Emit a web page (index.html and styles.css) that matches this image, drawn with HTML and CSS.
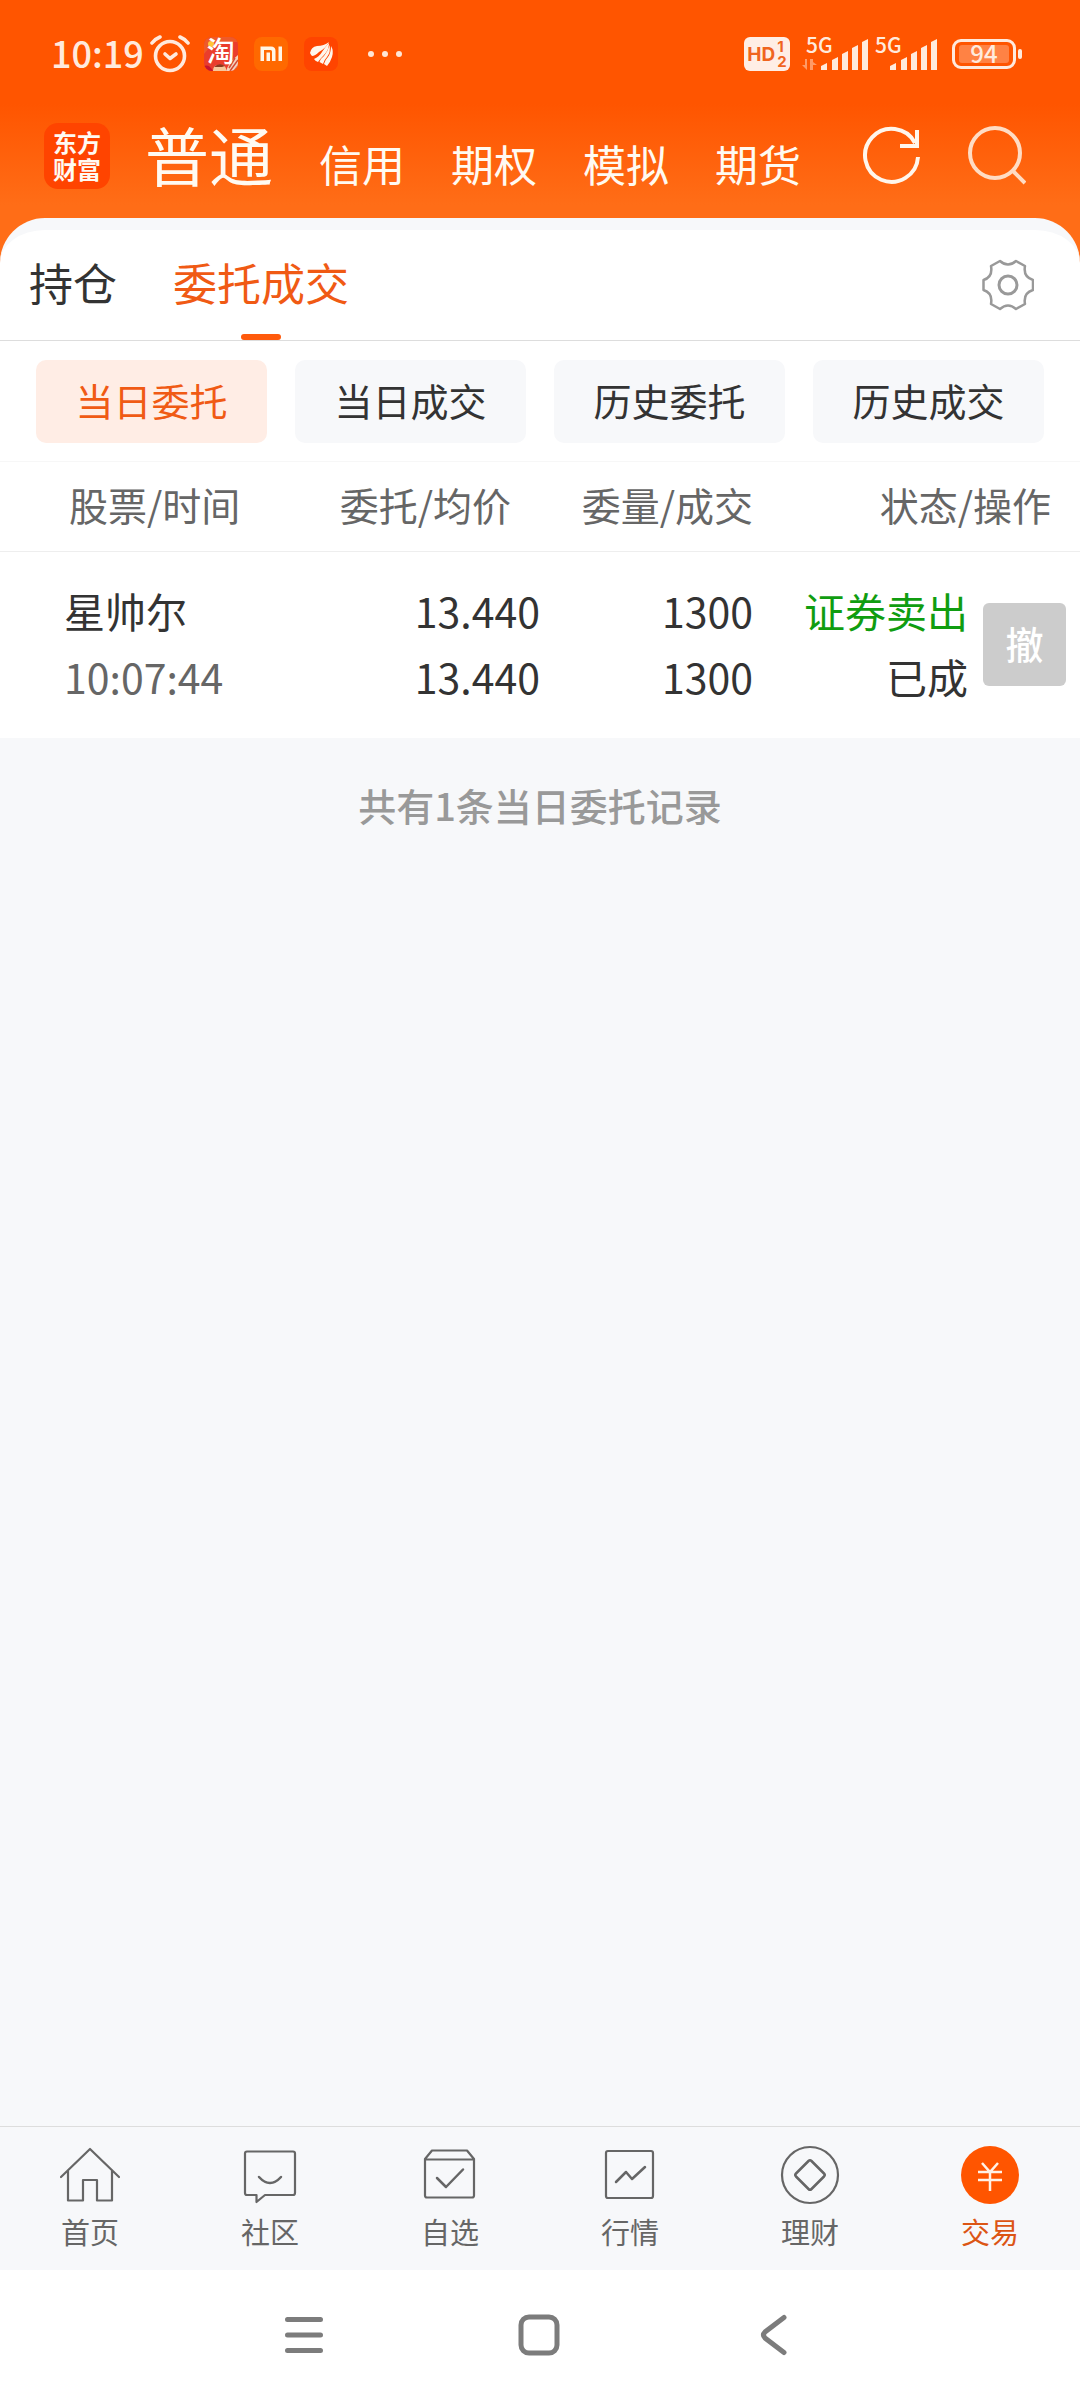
FILE: index.html
```html
<!DOCTYPE html>
<html lang="zh-CN">
<head>
<meta charset="utf-8">
<meta name="viewport" content="width=device-width, initial-scale=1">
<title>委托成交</title>
<link rel="stylesheet" href="styles.css">
</head>
<body>
<div class="app">
  <header class="top">
    <div class="status">
      <div class="status-left">
        <span class="clock">10:19</span>
        <svg class="alarm" width="40" height="38" viewBox="0 0 40 38" fill="none" stroke="#ffeadd" stroke-linecap="round">
          <circle cx="20" cy="21" r="14.5" stroke-width="3.6"/>
          <path d="M2 8Q5 4 10 2M38 8Q35 4 30 2" stroke-width="3.6"/>
          <path d="M15 19l5 4.500 6-4.500" stroke-width="3.600" stroke-linejoin="round"/>
        </svg>
        <span class="badge">
          <svg class="badge-art" width="34" height="34" viewBox="0 0 34 34">
            <rect width="34" height="34" fill="#ea3d2c"/>
            <path d="M0 0h34v5H20l-6 2-9 4-5 6z" fill="#ee5a2a"/>
            <circle cx="7" cy="7" r="3" fill="#ffc63a"/>
            <path d="M34 18v16H22q3-9 12-16z" fill="#f4d2bc"/>
            <path d="M34 23l-8 11M34 29l-4 5M31 21l-6 10" stroke="#d64a35" stroke-width="1.500"/>
            <path d="M0 29q5-2 9 5H0z" fill="#c9142f"/>
            <path d="M9 34q0-7 7-6 7 0 6 6z" fill="#f7c79a"/>
            <path d="M10 30q5-5 11-1l-3 1z" fill="#8a3a22"/>
          </svg>
          <span class="badge-text">淘</span>
        </span>
        <span class="badge">
          <svg class="badge-art" width="34" height="34" viewBox="0 0 34 34">
            <rect width="34" height="34" fill="#ff6900"/>
            <path d="M6.500 24V9.500H17Q21.500 9.500 21.500 14V24H18V14.500Q18 13 16.500 13H10V24zM12.500 15.500h3.500V24h-3.500zM24.500 9.500H28V24h-3.500z" fill="#fff6e6"/>
          </svg>
        </span>
        <span class="badge">
          <svg class="badge-art" width="34" height="34" viewBox="0 0 34 34">
            <rect width="34" height="34" fill="#ff4400"/>
            <g fill="#fff6ec">
              <path d="M6 16Q7 10 13 9Q20 9 25 5Q22 11 15 15Q11 19 8 19Q7 18 6 16z"/>
              <path d="M25 6Q25 13 20 18Q16 22 14 25Q11 24 10 22Q15 20 18 15Q21 10 25 6z"/>
              <path d="M25.500 8Q27 15 23 20Q20 23 19 27L15.500 25Q17 21 20 19Q24 14 25.500 8z"/>
              <path d="M27 9Q30 14 28 20Q26 26 23 29L20 27Q21 23 24 20Q27 16 27 9z"/>
            </g>
          </svg>
        </span>
        <svg class="more" width="34" height="8" viewBox="0 0 34 8" fill="#ffe6d6">
          <circle cx="3" cy="4" r="3"/><circle cx="17" cy="4" r="3"/><circle cx="31" cy="4" r="3"/>
        </svg>
      </div>
      <div class="status-right">
        <span class="hd"><span class="hd-main">HD</span><span class="hd-sims"><span>1</span><span>2</span></span></span>
        <span class="signal">
          <span class="signal-type">5G</span>
          <svg width="67" height="34" viewBox="0 0 67 34">
            <path d="M5 22v11l-5-5h3v-6zM8 33V22h3v3l4 3h-4v5z" fill="#ff9a66"/>
            <g fill="#ffeadd"><path d="M19 33v-4l6-3v7zM30 33V23l6-3v13zM40 33V17l6-3v19zM50 33V11l6-3v25zM60 33V5l6-3v31z"/></g>
          </svg>
        </span>
        <span class="signal second">
          <span class="signal-type">5G</span>
          <svg width="67" height="34" viewBox="0 0 67 34">
            <g fill="#ffeadd"><path d="M19 33v-4l6-3v7zM30 33V23l6-3v13zM40 33V17l6-3v19zM50 33V11l6-3v25zM60 33V5l6-3v31z"/></g>
          </svg>
        </span>
        <span class="battery"><span class="battery-level">94</span></span>
      </div>
    </div>
    <div class="bar">
      <a class="logo" href="#home"><span>东方</span><span>财富</span></a>
      <nav class="modes">
        <a class="mode current" href="#normal">普通</a>
        <a class="mode" href="#credit">信用</a>
        <a class="mode" href="#options">期权</a>
        <a class="mode" href="#demo">模拟</a>
        <a class="mode" href="#futures">期货</a>
      </nav>
      <div class="tools">
        <button class="icon-button" type="button" aria-label="刷新">
          <svg width="60" height="60" viewBox="0 0 60 60" fill="none" stroke="#fff6ec" stroke-width="4">
            <path d="M56 31A26.500 26.500 0 1 1 53 17"/>
            <path d="M55 4v16H38"/>
          </svg>
        </button>
        <button class="icon-button" type="button" aria-label="搜索">
          <svg width="60" height="60" viewBox="0 0 60 60" fill="none" stroke="#ffdcc4" stroke-width="4">
            <circle cx="29" cy="27" r="25"/>
            <path d="M46 44l13 13"/>
          </svg>
        </button>
      </div>
    </div>
  </header>

  <main class="sheet">
    <div class="tabs">
      <a class="tab" href="#positions">持仓</a>
      <a class="tab active" href="#orders">委托成交</a>
      <button class="icon-button settings" type="button" aria-label="设置">
        <svg width="52" height="52" viewBox="0 0 52 52" fill="none" stroke="#999" stroke-width="2.500" stroke-linejoin="round">
          <path d="M18 2Q26 9 34 2L43 7Q41 18 51 21V31Q41 34 43 45L34 50Q26 43 18 50L9 45Q11 34 1.500 31V21Q11 18 9 7Z"/>
          <circle cx="26" cy="26" r="9" stroke-width="3"/>
        </svg>
      </button>
    </div>

    <div class="filters">
      <button class="chip selected" type="button">当日委托</button>
      <button class="chip" type="button">当日成交</button>
      <button class="chip" type="button">历史委托</button>
      <button class="chip" type="button">历史成交</button>
    </div>

    <table class="orders">
      <thead>
        <tr>
          <th class="name" scope="col">股票/时间</th>
          <th class="price" scope="col">委托/均价</th>
          <th class="amount" scope="col">委量/成交</th>
          <th class="state" scope="col">状态/操作</th>
        </tr>
      </thead>
      <tbody>
        <tr>
          <td class="name"><div>星帅尔</div><div class="time">10:07:44</div></td>
          <td class="price"><div>13.440</div><div>13.440</div></td>
          <td class="amount"><div>1300</div><div>1300</div></td>
          <td class="state">
            <div class="state-row">
              <div class="state-text"><div class="sell">证券卖出</div><div>已成</div></div>
              <button class="cancel" type="button" disabled>撤</button>
            </div>
          </td>
        </tr>
      </tbody>
    </table>
  </main>

  <p class="summary">共有1条当日委托记录</p>

  <nav class="dock">
    <a class="dock-item" href="#index">
      <svg width="60" height="60" viewBox="0 0 60 60" fill="none" stroke="#666" stroke-width="2.2" stroke-linejoin="round" stroke-linecap="round">
        <path d="M1 32L30 4l29 28M8 26v29.500h15V35h14v20.500h15V26"/>
      </svg>
      <span>首页</span>
    </a>
    <a class="dock-item" href="#community">
      <svg width="60" height="60" viewBox="0 0 60 60" fill="none" stroke="#666" stroke-width="2.2" stroke-linejoin="round" stroke-linecap="round">
        <path d="M7 6.500h46q2 0 2 2V48q0 2-2 2H25l-8.500 7V50H7q-2 0-2-2V8.500q0-2 2-2z"/>
        <path d="M19 32q11 12 22 0" stroke-width="2.500"/>
      </svg>
      <span>社区</span>
    </a>
    <a class="dock-item" href="#watchlist">
      <svg width="60" height="60" viewBox="0 0 60 60" fill="none" stroke="#666" stroke-width="2.2" stroke-linejoin="round" stroke-linecap="round">
        <path d="M5 14l7-8.500h35l7 8.500v36.500q0 2-2 2H7q-2 0-2-2zM5 14.500h49"/>
        <path d="M17 33l9 9 17-17.500" stroke-width="2.500"/>
      </svg>
      <span>自选</span>
    </a>
    <a class="dock-item" href="#quotes">
      <svg width="60" height="60" viewBox="0 0 60 60" fill="none" stroke="#666" stroke-width="2.2" stroke-linejoin="round" stroke-linecap="round">
        <rect x="6" y="6" width="47" height="47" rx="2"/>
        <path d="M16 37l10-10 6 7 13-12" stroke-width="2.500"/>
      </svg>
      <span>行情</span>
    </a>
    <a class="dock-item" href="#wealth">
      <svg width="60" height="60" viewBox="0 0 60 60" fill="none" stroke="#666" stroke-width="2.200" stroke-linejoin="round">
        <circle cx="30" cy="30" r="28"/>
        <path d="M28.500 16q1.500-1.500 3 0L44 28.500q1.500 1.500 0 3L31.500 44q-1.500 1.500-3 0L16 31.500q-1.500-1.500 0-3z" stroke-width="2.500"/>
      </svg>
      <span>理财</span>
    </a>
    <a class="dock-item active" href="#trade">
      <svg width="60" height="60" viewBox="0 0 60 60" fill="none" stroke="#fff1e6" stroke-width="2.500">
        <circle cx="30" cy="30" r="29" fill="#ff5500" stroke="none"/>
        <path d="M22 18l8 9 8-9M18 27h24M18 35h24M30 27v19"/>
      </svg>
      <span>交易</span>
    </a>
  </nav>

  <div class="system">
    <button class="icon-button" type="button" aria-label="最近任务">
      <svg width="42" height="42" viewBox="0 0 42 42" fill="none" stroke="#7c7c7c" stroke-width="5" stroke-linecap="round">
        <path d="M4.500 5.500h33M4.500 21h33M4.500 36.500h33"/>
      </svg>
    </button>
    <button class="icon-button" type="button" aria-label="主屏幕">
      <svg width="42" height="42" viewBox="0 0 42 42" fill="none" stroke="#7c7c7c" stroke-width="5">
        <rect x="3" y="3" width="36" height="36" rx="8"/>
      </svg>
    </button>
    <button class="icon-button" type="button" aria-label="返回">
      <svg width="42" height="42" viewBox="0 0 42 42" fill="none" stroke="#7c7c7c" stroke-width="5" stroke-linecap="round">
        <path d="M31 3.500L12 18q-3 3 0 6l19 14.500"/>
      </svg>
    </button>
  </div>
</div>
</body>
</html>
```
FILE: styles.css
```css
* {
  box-sizing: border-box;
}

body {
  margin: 0;
  background: #fff;
  color: #333;
  font-family: "Noto Sans CJK SC", "Noto Sans", sans-serif;
  font-size: 41px;
}

a {
  color: inherit;
  text-decoration: none;
}

button {
  margin: 0;
  padding: 0;
  border: 0;
  background: none;
  color: inherit;
  font: inherit;
}

svg {
  display: block;
  flex: none;
}

.app {
  display: flex;
  flex-direction: column;
  min-height: 100vh;
  background: #f7f8fa;
}

/* Orange header */

.top {
  padding-bottom: 71px;
  background: linear-gradient(#ff5500 0, #ff5500 104px, #ff6d17 205px, #ff6d17 100%);
  color: #fffaf2;
}

.status {
  display: flex;
  justify-content: space-between;
  align-items: center;
  height: 108px;
  padding: 0 64px 0 51px;
  color: #ffeadd;
}

.status-left,
.status-right {
  display: flex;
  align-items: center;
}

.clock {
  margin-right: 6px;
  padding-bottom: 4px;
  font-size: 36px;
  font-weight: 500;
  line-height: 40px;
}

.alarm {
  margin-right: 14px;
}

.badge {
  position: relative;
  width: 34px;
  height: 34px;
  margin-right: 16px;
}

.badge-art {
  border-radius: 8px;
}

.badge-text {
  position: absolute;
  top: 0;
  left: 3px;
  color: #fff;
  font-size: 28px;
  font-weight: 500;
  line-height: 26px;
}

.more {
  margin-left: 14px;
}

.hd {
  display: flex;
  align-items: center;
  justify-content: center;
  gap: 2px;
  width: 46px;
  height: 34px;
  margin-right: 12px;
  border-radius: 6px;
  background: #ffeee5;
  color: #f0641e;
  font-family: Inter, sans-serif;
  font-weight: 700;
}

.hd-main {
  font-size: 19px;
}

.hd-sims {
  display: flex;
  flex-direction: column;
  font-size: 15px;
  line-height: 15px;
}

.signal {
  position: relative;
  margin-right: 2px;
}

.signal-type {
  position: absolute;
  top: 0;
  left: 4px;
  font-size: 21px;
  font-weight: 500;
  line-height: 14px;
}

.signal.second {
  margin-right: 14px;
}

.battery {
  position: relative;
  width: 64px;
  height: 30px;
  padding: 3px 4px;
  border: 3px solid #ffeadd;
  border-radius: 9px;
}

.battery::after {
  content: "";
  position: absolute;
  top: 7px;
  right: -9px;
  width: 4px;
  height: 10px;
  border-radius: 2px;
  background: #ffeadd;
}

.battery-level {
  display: block;
  height: 18px;
  border-radius: 3px;
  background: #ff8244;
  font-size: 24px;
  font-weight: 500;
  line-height: 16px;
  text-align: center;
}

.bar {
  display: flex;
  align-items: center;
  height: 96px;
  padding: 0 54px 0 44px;
}

.logo {
  display: flex;
  flex-direction: column;
  align-items: center;
  justify-content: center;
  width: 66px;
  height: 66px;
  margin-right: 35px;
  padding-bottom: 3px;
  border-radius: 14px;
  background: #ff4400;
  font-size: 24px;
  font-weight: 700;
  line-height: 27px;
}

.modes {
  display: flex;
  align-items: flex-end;
  gap: 46px;
  padding-bottom: 6px;
  font-size: 43px;
  line-height: 1;
}

.mode {
  white-space: nowrap;
}

.mode.current {
  font-size: 64px;
}

.tools {
  display: flex;
  gap: 44px;
  margin-left: auto;
}

/* White sheet */

.sheet {
  margin-top: -57px;
  border-top: 12px solid #f7f8fa;
  border-radius: 45px 45px 0 0;
  background: #fff;
}

.tabs {
  display: flex;
  gap: 56px;
  height: 111px;
  padding: 0 46px 0 29px;
  border-bottom: 1px solid #ddd;
}

.tab {
  position: relative;
  font-size: 44px;
  line-height: 104px;
}

.tab.active {
  color: #f05a14;
}

.tab.active::after {
  content: "";
  position: absolute;
  bottom: 0;
  left: 50%;
  width: 40px;
  height: 6px;
  margin-left: -20px;
  border-radius: 3px;
  background: #ff5a0c;
}

.settings {
  align-self: center;
  margin-left: auto;
}

.filters {
  display: grid;
  grid-template-columns: repeat(4, 1fr);
  gap: 28px;
  padding: 19px 36px 18px;
  border-bottom: 1px solid #f7f7f7;
}

.chip {
  height: 83px;
  padding-bottom: 4px;
  border-radius: 10px;
  background: #f7f8fa;
  font-size: 38px;
}

.chip.selected {
  background: #ffede5;
  color: #f05a14;
}

.orders {
  width: 100%;
  border-collapse: collapse;
  table-layout: fixed;
}

.orders th {
  height: 89px;
  padding: 0 0 4px;
  border-bottom: 1px solid #eee;
  color: #666;
  font-size: 39px;
  font-weight: 400;
  line-height: 48px;
  text-align: right;
  white-space: nowrap;
}

.orders td {
  height: 187px;
  padding: 0 0 4px;
  line-height: 66px;
  text-align: right;
}

.orders .name {
  width: 26%;
  text-align: left;
}

.orders .price {
  width: 24%;
}

.orders .amount {
  width: 20%;
  padding-right: 3px;
}

.orders th.name {
  padding-left: 69px;
}

.orders th.price,
.orders th.state {
  padding-right: 29px;
}

.orders td.name {
  padding-left: 64px;
}

.orders td.state {
  padding: 0 14px 0 0;
}

.time {
  color: #666;
}

.state-row {
  display: flex;
  align-items: center;
  justify-content: flex-end;
  gap: 15px;
}

.state-text {
  padding-bottom: 4px;
}

.sell {
  color: #109d10;
}

.cancel {
  width: 83px;
  height: 83px;
  padding-bottom: 4px;
  border-radius: 6px;
  background: #ccc;
  color: #fff;
  font-size: 38px;
  font-weight: 500;
}

.summary {
  flex: 1;
  margin: 0;
  padding-top: 37px;
  color: #999;
  font-size: 38px;
  font-weight: 500;
  line-height: 60px;
  text-align: center;
}

/* Bottom navigation */

.dock {
  display: grid;
  grid-template-columns: repeat(6, 1fr);
  height: 144px;
  border-top: 1px solid #ddd;
  background: #f7f8fa;
}

.dock-item {
  display: flex;
  flex-direction: column;
  align-items: center;
  gap: 6px;
  padding-top: 18px;
  color: #666;
  font-size: 29px;
  line-height: 40px;
}

.dock-item.active {
  color: #dc5514;
}

.system {
  display: flex;
  align-items: center;
  justify-content: center;
  gap: 193px;
  height: 130px;
  padding-right: 2px;
  background: #fff;
}
```
